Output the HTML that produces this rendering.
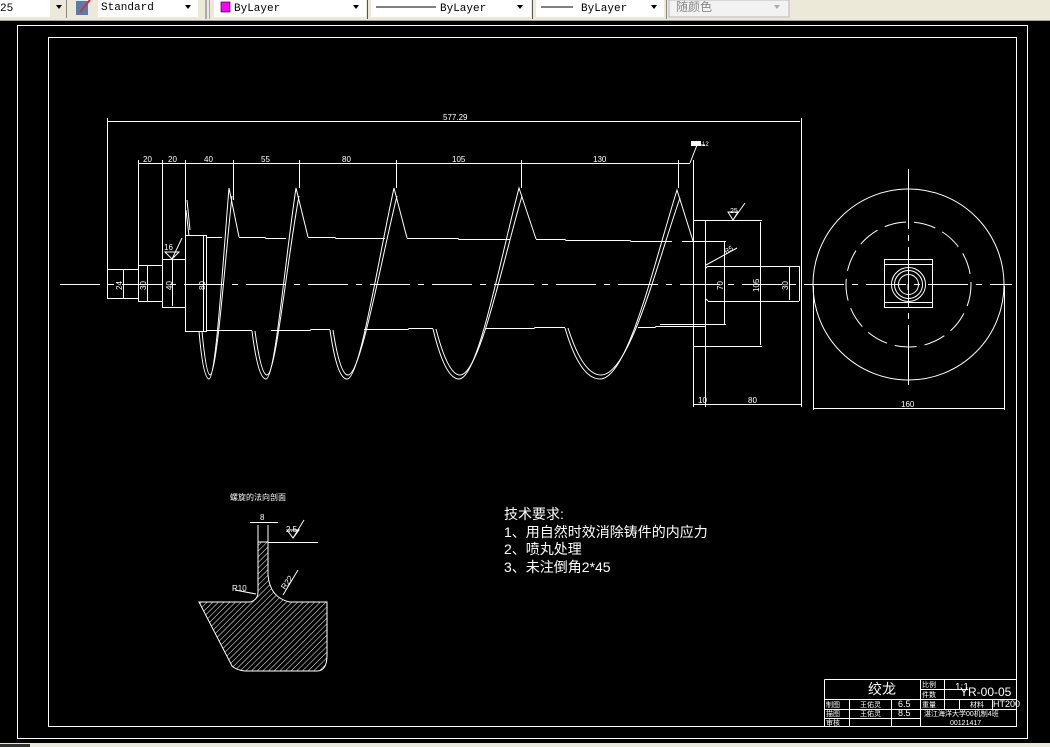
<!DOCTYPE html>
<html><head><meta charset="utf-8"><style>
html,body{margin:0;padding:0;background:#000;width:1050px;height:747px;overflow:hidden}
svg{display:block}
text{font-family:"Liberation Sans","Noto Sans CJK SC",sans-serif}
</style></head><body>
<svg width="1050" height="747" viewBox="0 0 1050 747" xmlns="http://www.w3.org/2000/svg">
<defs>
<pattern id="h" width="4" height="4" patternUnits="userSpaceOnUse" patternTransform="rotate(45)">
<line x1="0" y1="0" x2="0" y2="4" stroke="#fff" stroke-width="1"/></pattern>
</defs>
<!-- toolbar -->
<rect x="0" y="0" width="1050" height="21" fill="#ece9d8"/>
<line x1="0" y1="20.5" x2="1050" y2="20.5" stroke="#a0a0a0"/>
<g style="font-family:'Liberation Mono',monospace" font-size="11" fill="#000">
<rect x="0" y="0" width="50" height="17" fill="#fff"/><text x="0" y="11" style="font-family:'Liberation Mono',monospace">25</text>
<path d="M56 5h6l-3 4z"/>
<rect x="66" y="0" width="1" height="18" fill="#888"/>
<rect x="76" y="1" width="12" height="14" fill="#5a7bb0"/><path d="M80 12 L90 0" stroke="#c33" stroke-width="2"/>
<rect x="98" y="0" width="100" height="17" fill="#fff"/><text x="101" y="10" style="font-family:'Liberation Mono',monospace">Standard</text>
<path d="M185 5h6l-3 4z"/>
<rect x="205" y="0" width="2" height="19" fill="#aaa"/><rect x="209" y="0" width="1" height="19" fill="#aaa"/>
<rect x="214" y="0" width="152" height="17" fill="#fff"/>
<rect x="221" y="2" width="9" height="10" fill="#f0f" stroke="#000" stroke-width="0.6"/><text x="234" y="11" style="font-family:'Liberation Mono',monospace">ByLayer</text>
<path d="M353 5h6l-3 4z"/>
<rect x="367" y="0" width="1" height="19" fill="#555"/>
<rect x="371" y="0" width="160" height="17" fill="#fff"/>
<line x1="376" y1="7" x2="436" y2="7" stroke="#000"/><text x="440" y="11" style="font-family:'Liberation Mono',monospace">ByLayer</text>
<path d="M517 5h6l-3 4z"/>
<rect x="532" y="0" width="1" height="19" fill="#555"/>
<rect x="536" y="0" width="128" height="17" fill="#fff"/>
<line x1="541" y1="7" x2="573" y2="7" stroke="#000"/><text x="581" y="11" style="font-family:'Liberation Mono',monospace">ByLayer</text>
<path d="M651 5h6l-3 4z"/>
<rect x="666" y="0" width="1" height="19" fill="#888"/>
<rect x="669" y="0" width="120" height="17" fill="#f2f2f2" stroke="#bbb"/>
<text x="676" y="11" fill="#888" font-size="12">随颜色</text>
<path d="M774 5h6l-3 4z" fill="#aaa"/>
</g>
<!-- bottom strip -->
<rect x="0" y="743" width="1050" height="4" fill="#ece9d8"/>
<rect x="0" y="744" width="30" height="3" fill="#333"/>

<g fill="none" stroke="#fff" stroke-width="1">
<rect x="17.5" y="25.5" width="1010" height="713"/>
<rect x="48.5" y="37.5" width="968" height="689"/>
<line x1="60" y1="284.5" x2="1012" y2="284.5" stroke-dasharray="40,8,6,8"/>
<line x1="107" y1="121.5" x2="800" y2="121.5"/>
<line x1="107.5" y1="118" x2="107.5" y2="270"/>
<line x1="801.5" y1="118" x2="801.5" y2="407"/>
<line x1="138" y1="163.5" x2="690" y2="163.5"/>
<line x1="138.5" y1="160" x2="138.5" y2="265"/>
<line x1="162.5" y1="160" x2="162.5" y2="259"/>
<line x1="185.5" y1="160" x2="185.5" y2="235"/>
<line x1="233.5" y1="160" x2="233.5" y2="200"/>
<line x1="299.5" y1="160" x2="299.5" y2="188"/>
<line x1="396.5" y1="160" x2="396.5" y2="188"/>
<line x1="521.5" y1="160" x2="521.5" y2="188"/>
<line x1="678.5" y1="160" x2="678.5" y2="188"/>
<line x1="693.5" y1="160" x2="693.5" y2="407"/>
<path d="M690 163 L697 145 L705 145"/>
<rect x="107.5" y="269.5" width="31" height="29"/>
<line x1="123.5" y1="269" x2="123.5" y2="298"/>
<rect x="138.5" y="265.5" width="24" height="36"/>
<line x1="147.5" y1="265" x2="147.5" y2="301"/>
<path d="M162.5 259.5 H185.5 V307.5 H162.5 Z"/>
<line x1="172.5" y1="260" x2="172.5" y2="306"/>
<rect x="185.5" y="235.5" width="21" height="96"/>
<line x1="203.5" y1="236" x2="203.5" y2="331"/>
<path d="M190 230 L187 200 M189 236 L186 210"/>
<path d="M165 252 L172 259 L179 252 Z M172 259 L182 238"/>
<path d="M206 237.5 H222 M239 237.5 H265 L266 238.5 H286 M308 237.5 H335 L336 238.5 H385 M407 238.5 H458 L459 239.5 H510 M536 239.5 H565 L566 240.5 H630 L631 241.5 H672 M693 241.5 H705"/>
<path d="M206 331.5 H198 M207 330.5 H252 M271 330.5 H310 L311 329.5 H330 M364 329.5 H408 L409 328.5 H433 M485 328.5 H534 L535 327.5 H565 M638 327.5 H655 L656 326.5 H705"/>
<g>
<path d="M199 331 Q203 378 209 379 C216 378 223 260 229 188 L239 237"/>
<path d="M202 331 Q206 374 210 375 C217 374 225 260 232 196"/>
<path d="M252 331 Q258 379 266 379 C275 379 285 260 296 188 L308 237"/>
<path d="M255 331 Q261 375 267 375 C276 375 287 260 299 196"/>
<path d="M330 330 Q337 379 347 379 C360 379 378 260 394 188 L407 238"/>
<path d="M333 330 Q340 375 348 375 C361 375 381 260 397 196"/>
<path d="M433 329 Q445 379 459 379 C478 379 500 260 519 188 L536 239"/>
<path d="M436 329 Q448 375 460 375 C480 375 503 260 522 196"/>
<path d="M565 328 Q580 379 600 379 C628 379 655 260 677 190 L693 241"/>
<path d="M568 328 Q583 375 601 375 C630 375 658 260 680 198"/>
</g>
<path d="M693.5 220.5 H762 M693.5 346.5 H762"/>
<line x1="705.5" y1="220" x2="705.5" y2="407"/>
<path d="M682 241.5 H726 M660 324.5 H726"/>
<path d="M708 266.5 H799 M708 301.5 H799 M799.5 266 V301"/>
<path d="M708 266 L706 268 M708 301 L706 299"/>
<line x1="724.5" y1="242" x2="724.5" y2="324"/>
<line x1="760.5" y1="222" x2="760.5" y2="345"/>
<line x1="789.5" y1="267" x2="789.5" y2="300"/>
<path d="M706 265 L737 248"/>
<path d="M728 212 L733 220 L738 212 Z M733 220 L745 203"/>
<line x1="693" y1="404.5" x2="801" y2="404.5"/>
<circle cx="908.5" cy="284.5" r="95.5"/>
<circle cx="908.5" cy="284.5" r="62.5" stroke-dasharray="22,8"/>
<rect x="884.5" y="259.5" width="48" height="48"/>
<line x1="884" y1="264.5" x2="933" y2="264.5"/>
<line x1="884" y1="302.5" x2="933" y2="302.5"/>
<circle cx="908.5" cy="284.5" r="17"/>
<circle cx="908.5" cy="284.5" r="14"/>
<circle cx="908.5" cy="284.5" r="10"/>
<line x1="908.5" y1="169" x2="908.5" y2="389" stroke-dasharray="60,6,6,6"/>
<path d="M908 284 V290"/>
<line x1="813" y1="408.5" x2="1004" y2="408.5"/>
<line x1="813.5" y1="286" x2="813.5" y2="410"/>
<line x1="1004.5" y1="286" x2="1004.5" y2="410"/>
<path d="M258 542 V592 Q258 600 250 602 H199 L232 666 Q236 670 245 671 H318 Q327 670 327 655 V602 H290 Q270 598 268 575 V542 Z" fill="url(#h)"/>
<path d="M258 542 V525 M268 542 V525 M250 522.5 H278"/>
<path d="M268 542.5 H318 M287 530 L293 538 L299 530 Z M293 538 L304 520"/>
<path d="M235 590 L256 594 M283 595 L298 570"/>
<path d="M824.5 679.5 H1016 M824.5 679.5 V727 M824 699.5 H1016 M824 709.5 H1016 M824 718.5 H920 M920 689.5 H968 M849.5 699 V727 M891.5 699 V727 M920.5 679 V727 M944.5 679 V709 M959.5 699 V709 M992.5 699 V709"/>
</g>
<g fill="#fff" font-size="8">
<text x="443" y="120">577.29</text>
<text x="143" y="162">20</text><text x="168" y="162">20</text>
<text x="204" y="162">40</text><text x="261" y="162">55</text>
<text x="342" y="162">80</text><text x="452" y="162">105</text>
<text x="593" y="162">130</text>
<text x="164" y="250">16</text>
<text x="730" y="213" font-size="7">25</text>
<text x="698" y="403">10</text><text x="748" y="403">80</text>
<text x="901" y="407">160</text>
<text transform="translate(122,290) rotate(-90)">24</text>
<text transform="translate(146,290) rotate(-90)">30</text>
<text transform="translate(172,290) rotate(-90)">40</text>
<text transform="translate(205,290) rotate(-90)">80</text>
<text transform="translate(723,290) rotate(-90)">70</text>
<text transform="translate(759,292) rotate(-90)">105</text>
<text transform="translate(788,290) rotate(-90)">30</text>
<text transform="translate(726,254) rotate(-30)" font-size="7">R5</text>
<rect x="691" y="141" width="10" height="5"/><text x="702" y="146" font-size="6">12</text>
<text x="230" y="500" font-size="8">螺旋的法向剖面</text>
<text x="260" y="520">8</text>
<text x="286" y="532" font-size="8">2.5</text>
<text x="232" y="591" font-size="8">R10</text>
<text transform="translate(285,590) rotate(-55)" font-size="8">R22</text>
</g>
<g fill="#fff" font-size="14">
<text x="504" y="519">技术要求:</text>
<text x="504" y="537">1、用自然时效消除铸件的内应力</text>
<text x="504" y="554">2、喷丸处理</text>
<text x="504" y="572">3、未注倒角2*45</text>
</g>
<g fill="#fff" font-size="7">
<text x="868" y="694" font-size="14">绞龙</text>
<text x="922" y="687">比例</text><text x="922" y="697">件数</text>
<text x="955" y="690" font-size="10">1:1</text>
<text x="960" y="696" font-size="12">YR-00-05</text>
<text x="826" y="707">制图</text><text x="860" y="707">王佑灵</text><text x="898" y="707" font-size="9">6.5</text>
<text x="922" y="707">重量</text><text x="970" y="707">材料</text><text x="993" y="707" font-size="9">HT200</text>
<text x="826" y="716">描图</text><text x="860" y="716">王佑灵</text><text x="898" y="716" font-size="9">8.5</text>
<text x="924" y="716">湛江海洋大学00机制4班</text>
<text x="950" y="725">00121417</text>
<text x="826" y="725">审核</text>
</g>
</svg>
</body></html>
